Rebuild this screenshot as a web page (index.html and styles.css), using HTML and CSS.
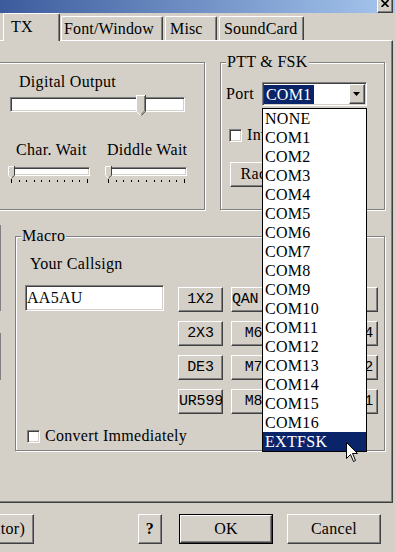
FILE: index.html
```html
<!DOCTYPE html>
<html lang="en">
<head>
    <meta charset="UTF-8">
    <meta name="viewport" content="width=device-width, initial-scale=1.0">
    <title>Setup</title>
    <link rel="stylesheet" href="styles.css">
</head>
<body>
    <div class="window">
        <!-- Title bar (only the bottom strip is on screen) -->
        <div class="titlebar">
            <div class="btn close-btn">
                <svg width="8" height="7" viewBox="0 0 8 7"><path d="M0.5 0L7.5 7M7.5 0L0.5 7" stroke="#000" stroke-width="1.7"/></svg>
            </div>
        </div>

        <!-- Tabs -->
        <div class="tabs">
            <div class="tab tab-tx active">TX</div>
            <div class="tab tab-font">Font/Window</div>
            <div class="tab tab-misc">Misc</div>
            <div class="tab tab-sound">SoundCard</div>
        </div>

        <div class="page">
            <div class="top-row">
                <!-- Output levels -->
                <div class="group output-group">
                    <div class="digital-label">Digital Output</div>
                    <div class="slider big-slider">
                        <div class="sunken track"></div>
                        <svg class="thumb big-thumb" style="left: 126px" width="10" height="22" viewBox="0 0 10 22">
                            <path d="M0 0H10V16L5 21L0 16Z" fill="#d4d0c8"/>
                            <path d="M0.5 16.2V0.5H9" stroke="#fff" fill="none"/>
                            <path d="M9.5 0V16.2L5 20.8" stroke="#404040" fill="none"/>
                            <path d="M8.5 1V15.8L5 19.4" stroke="#808080" fill="none"/>
                            <path d="M0.5 16.2L5 20.8" stroke="#fff" fill="none"/>
                        </svg>
                    </div>
                    <div class="wait-row">
                        <div class="wait-col">
                            <div class="wait-label char-label">Char. Wait</div>
                            <div class="slider small-slider">
                                <div class="sunken track"></div>
                                <svg class="thumb small-thumb" width="7" height="13" viewBox="0 0 7 13">
                                    <path d="M0 0H7V9L3.5 12.5L0 9Z" fill="#d4d0c8"/>
                                    <path d="M0.5 9.2V0.5H6" stroke="#fff" fill="none"/>
                                    <path d="M6.5 0V9.2L3.5 12.3" stroke="#404040" fill="none"/>
                                    <path d="M0.5 9.2L3.5 12.3" stroke="#fff" fill="none"/>
                                </svg>
                            </div>
                            <div class="ticks"><i></i><i></i><i></i><i></i><i></i><i></i><i></i><i></i><i></i><i></i><i></i></div>
                        </div>
                        <div class="wait-col">
                            <div class="wait-label diddle-label">Diddle Wait</div>
                            <div class="slider small-slider">
                                <div class="sunken track"></div>
                                <svg class="thumb small-thumb" width="7" height="13" viewBox="0 0 7 13">
                                    <path d="M0 0H7V9L3.5 12.5L0 9Z" fill="#d4d0c8"/>
                                    <path d="M0.5 9.2V0.5H6" stroke="#fff" fill="none"/>
                                    <path d="M6.5 0V9.2L3.5 12.3" stroke="#404040" fill="none"/>
                                    <path d="M0.5 9.2L3.5 12.3" stroke="#fff" fill="none"/>
                                </svg>
                            </div>
                            <div class="ticks"><i></i><i></i><i></i><i></i><i></i><i></i><i></i><i></i><i></i><i></i><i></i></div>
                        </div>
                    </div>
                </div>

                <!-- PTT & FSK -->
                <div class="group ptt-group">
                    <div class="caption">PTT &amp; FSK</div>
                    <div class="port-row">
                        <span>Port</span>
                        <div class="sunken combo">
                            <span class="combo-value">COM1</span>
                            <span class="btn combo-btn">
                                <svg width="7" height="4" viewBox="0 0 7 4"><path d="M0 0H7L3.5 4Z" fill="#000"/></svg>
                            </span>
                        </div>
                    </div>
                    <div class="check-row invert-row"><span class="sunken checkbox"></span>Invert</div>
                    <div class="btn radio-btn">Radio Setup</div>
                </div>
            </div>

            <div class="mid-row">
                <div class="left-stubs">
                    <div class="stub stub-a"></div>
                    <div class="stub stub-b"></div>
                </div>

                <!-- Macro -->
                <div class="group macro-group">
                    <div class="caption">Macro</div>
                    <div class="callsign-label">Your Callsign</div>
                    <div class="macro-body">
                        <div class="sunken field">AA5AU</div>
                        <div class="macro-grid">
                            <div class="btn macro-btn">1X2</div>
                            <div class="btn macro-btn">QAN&nbsp;&nbsp;</div>
                            <div class="btn macro-btn">QRZ</div>
                            <div class="btn macro-btn">CQ</div>
                            <div class="btn macro-btn">2X3</div>
                            <div class="btn macro-btn">M6</div>
                            <div class="btn macro-btn">M9</div>
                            <div class="btn macro-btn">QSO4</div>
                            <div class="btn macro-btn">DE3</div>
                            <div class="btn macro-btn">M7</div>
                            <div class="btn macro-btn">M10</div>
                            <div class="btn macro-btn">QSO2</div>
                            <div class="btn macro-btn">UR599</div>
                            <div class="btn macro-btn">M8</div>
                            <div class="btn macro-btn">M11</div>
                            <div class="btn macro-btn">QSO1</div>
                        </div>
                    </div>
                    <div class="check-row convert-row"><span class="sunken checkbox"></span>Convert Immediately</div>
                </div>
            </div>
        </div>

        <!-- Dialog buttons -->
        <div class="bottom-row">
            <div class="btn dlg-btn btn-log">Log (Editor)</div>
            <div class="btn dlg-btn btn-help">?</div>
            <div class="default-frame"><div class="btn dlg-btn btn-ok">OK</div></div>
            <div class="btn dlg-btn btn-cancel">Cancel</div>
        </div>

        <!-- Open port list -->
        <div class="dropdown">
            <div class="item">NONE</div>
            <div class="item">COM1</div>
            <div class="item">COM2</div>
            <div class="item">COM3</div>
            <div class="item">COM4</div>
            <div class="item">COM5</div>
            <div class="item">COM6</div>
            <div class="item">COM7</div>
            <div class="item">COM8</div>
            <div class="item">COM9</div>
            <div class="item">COM10</div>
            <div class="item">COM11</div>
            <div class="item">COM12</div>
            <div class="item">COM13</div>
            <div class="item">COM14</div>
            <div class="item">COM15</div>
            <div class="item">COM16</div>
            <div class="item selected">EXTFSK</div>
        </div>

        <svg class="cursor" width="13" height="21" viewBox="0 0 13 21">
            <path d="M0.5 0.5V16.5L4.5 12.5L7.5 19.5L9.5 18.5L6.5 11.5H11.5Z" fill="#fff" stroke="#000"/>
        </svg>
    </div>
</body>
</html>
```

FILE: styles.css
```css
* {
    box-sizing: border-box;
}
html, body {
    margin: 0;
    overflow: hidden;
}
body {
    font-family: "Liberation Serif", "Times New Roman", serif;
    font-size: 16px;
    line-height: 18px;
    letter-spacing: 0.3px;
    color: #000;
    background-color: #d4d0c8;
}
.window {
    position: relative;
    width: 395px;
    height: 552px;
    overflow: hidden;
    background-color: #d4d0c8;
}

/* classic 3d borders */
.btn {
    background-color: #d4d0c8;
    border: 1px solid;
    border-color: #fff #404040 #404040 #fff;
    box-shadow: inset -1px -1px 0 #808080;
}
.sunken {
    background-color: #fff;
    border: 1px solid;
    border-color: #808080 #fff #fff #808080;
    box-shadow: inset 1px 1px 0 #404040, inset -1px -1px 0 #d4d0c8;
}
.group {
    border: 1px solid #808080;
    box-shadow: 1px 1px 0 #fff, inset 1px 1px 0 #fff;
}
.caption {
    width: fit-content;
    margin: -10px 0 0 5px;
    padding: 0 1px;
    background-color: #d4d0c8;
}

/* title bar */
.titlebar {
    height: 13px;
    display: flex;
    justify-content: flex-end;
    padding-right: 2px;
    background: linear-gradient(to right, #3b5b9d, #a6c6ee);
}
.close-btn {
    width: 16px;
    height: 16px;
    margin-top: -3px;
    display: flex;
    justify-content: center;
    padding-top: 2px;
}

/* tabs */
.tabs {
    height: 27px;
    display: flex;
    align-items: flex-end;
    padding-left: 3px;
}
.tab {
    position: relative;
    height: 24px;
    padding-top: 3px;
    white-space: nowrap;
    letter-spacing: 0.15px;
    background-color: #d4d0c8;
    border-left: 1px solid #fff;
    border-top: 1px solid #fff;
    border-right: 1px solid #404040;
    border-radius: 2px 2px 0 0;
    box-shadow: inset -1px 0 0 #808080;
}
.tab.active {
    z-index: 1;
    height: 28px;
    margin-bottom: -1px;
    padding-top: 4px;
}
.tab-tx {
    width: 57px;
    padding-left: 7px;
}
.tab-font {
    width: 102px;
    margin-left: 1px;
    padding-left: 2px;
}
.tab-misc {
    width: 52px;
    margin-left: 2px;
    padding-left: 4px;
}
.tab-sound {
    width: 85px;
    margin-left: 2px;
    padding-left: 4px;
}

/* tab page */
.page {
    width: 413px;
    height: 463px;
    margin-left: -20px;
    border-top: 1px solid #fff;
    border-left: 1px solid #fff;
    border-right: 1px solid #404040;
    border-bottom: 1px solid #404040;
    box-shadow: inset -1px -1px 0 #808080;
}
.top-row {
    display: flex;
    gap: 15px;
    margin-top: 21px;
    padding-left: 9px;
}
.output-group {
    width: 215px;
    height: 148px;
}
.ptt-group {
    width: 165px;
    height: 148px;
}

/* sliders */
.digital-label {
    margin: 10px 0 0 28px;
}
.slider {
    position: relative;
}
.thumb {
    position: absolute;
    display: block;
}
.big-slider {
    width: 175px;
    height: 22px;
    margin: 6px 0 0 19px;
}
.big-slider .track {
    height: 15px;
}
.big-thumb {
    top: -2px;
}
.wait-row {
    display: flex;
    gap: 15px;
    margin-top: 22px;
    padding-left: 17px;
}
.wait-col {
    width: 82px;
}
.wait-label {
    white-space: nowrap;
}
.char-label {
    padding-left: 8px;
}
.diddle-label {
    padding-left: 2px;
}
.small-slider {
    height: 12px;
    margin-top: 8px;
}
.small-slider .track {
    height: 9px;
}
.small-thumb {
    top: -1px;
    left: 0;
}
.ticks {
    display: flex;
    justify-content: space-between;
    align-items: flex-start;
    height: 5px;
    padding: 0 2px 0 3px;
}
.ticks i {
    width: 1px;
    height: 2px;
    margin-top: 1px;
    background-color: #000;
}
.ticks i:first-child, .ticks i:last-child {
    height: 4px;
    margin-top: 0;
}

/* PTT & FSK */
.port-row {
    display: flex;
    align-items: center;
    gap: 8px;
    height: 24px;
    margin-top: 11px;
    padding-left: 5px;
}
.combo {
    width: 105px;
    height: 24px;
    display: flex;
    align-items: center;
    justify-content: space-between;
    padding: 0 1px;
}
.combo-value {
    height: 19px;
    line-height: 19px;
    padding: 0 2px;
    color: #fff;
    background-color: #0a246a;
}
.combo-btn {
    width: 16px;
    height: 20px;
    display: flex;
    align-items: center;
    justify-content: center;
}
.check-row {
    display: flex;
    align-items: center;
    gap: 5px;
    white-space: nowrap;
}
.checkbox {
    width: 13px;
    height: 13px;
}
.invert-row {
    margin-top: 20px;
    padding-left: 8px;
}
.radio-btn {
    width: 103px;
    height: 25px;
    margin: 18px 0 0 9px;
    text-align: center;
    line-height: 22px;
}

/* Macro */
.mid-row {
    display: flex;
    gap: 14px;
}
.left-stubs {
    width: 20px;
}
.stub {
    border: 1px solid #808080;
    border-left: none;
    box-shadow: inset -1px 0 0 #fff;
}
.stub-a {
    height: 86px;
    margin-top: 15px;
}
.stub-b {
    height: 47px;
    margin-top: 22px;
}
.macro-group {
    width: 370px;
    height: 215px;
    margin-top: 26px;
}
.callsign-label {
    margin: 10px 0 0 14px;
}
.macro-body {
    display: flex;
    gap: 14px;
    margin-top: 12px;
    padding-left: 9px;
}
.field {
    width: 139px;
    height: 26px;
    padding-left: 1px;
    line-height: 24px;
}
.macro-grid {
    display: grid;
    grid-template-columns: 45px 45px 41px 45px;
    grid-auto-rows: 25px;
    gap: 9px 8px;
    margin-top: 2px;
}
.macro-btn {
    font-family: "Liberation Mono", "Courier New", monospace;
    font-size: 15px;
    letter-spacing: -0.2px;
    line-height: 23px;
    text-align: center;
    white-space: nowrap;
    overflow: hidden;
}
.convert-row {
    margin-top: 13px;
    padding-left: 11px;
}

/* dialog buttons */
.bottom-row {
    display: flex;
    align-items: flex-start;
    margin-top: 11px;
}
.dlg-btn {
    height: 30px;
    line-height: 28px;
    text-align: center;
    white-space: nowrap;
}
.btn-log {
    width: 102px;
    margin-left: -68px;
}
.btn-help {
    width: 24px;
    margin-left: 104px;
    font-weight: bold;
}
.default-frame {
    width: 94px;
    height: 30px;
    margin-left: 17px;
    border: 1px solid #000;
}
.btn-ok {
    height: 28px;
    line-height: 26px;
}
.btn-cancel {
    width: 94px;
    margin-left: 14px;
}

/* open drop-down list */
.dropdown {
    position: absolute;
    left: 262px;
    top: 108px;
    width: 105px;
    border: 1px solid #000;
    background-color: #fff;
    z-index: 5;
}
.item {
    height: 19px;
    line-height: 19px;
    padding-left: 2px;
}
.item.selected {
    color: #fff;
    background-color: #0a246a;
}
.cursor {
    position: absolute;
    left: 346px;
    top: 442px;
    z-index: 6;
}
```
